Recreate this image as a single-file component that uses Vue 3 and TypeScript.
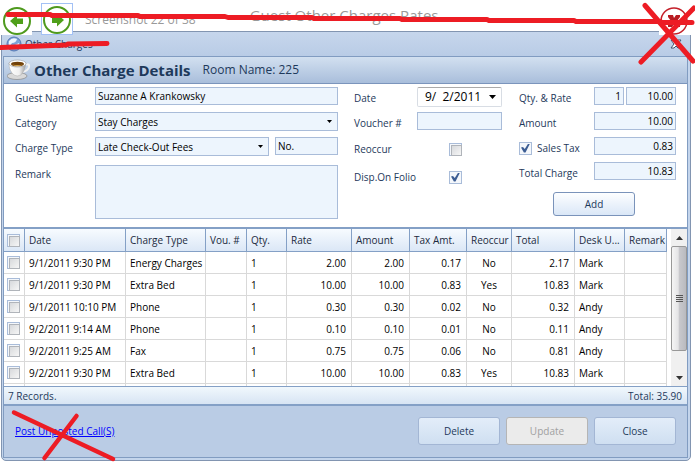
<script setup lang="ts">
import { ref } from 'vue'

interface Charge {
  date: string
  type: string
  qty: string
  rate: string
  amount: string
  tax: string
  reoccur: string
  total: string
  user: string
}

const row = (date: string, type: string, amount: string, tax: string, reoccur: string, total: string, user: string): Charge => ({
  date, type, qty: date ? '1' : '', rate: amount, amount, tax, reoccur, total, user,
})

const charges: Charge[] = [
  row('9/1/2011 9:30 PM', 'Energy Charges', '2.00', '0.17', 'No', '2.17', 'Mark'),
  row('9/1/2011 9:30 PM', 'Extra Bed', '10.00', '0.83', 'Yes', '10.83', 'Mark'),
  row('9/1/2011 10:10 PM', 'Phone', '0.30', '0.02', 'No', '0.32', 'Andy'),
  row('9/2/2011 9:14 AM', 'Phone', '0.10', '0.01', 'No', '0.11', 'Andy'),
  row('9/2/2011 9:25 AM', 'Fax', '0.75', '0.06', 'No', '0.81', 'Andy'),
  row('9/2/2011 9:30 PM', 'Extra Bed', '10.00', '0.83', 'Yes', '10.83', 'Mark'),
  row('', '', '', '', '', '', ''),
]

const headings = ['Date', 'Charge Type', 'Vou. #', 'Qty.', 'Rate', 'Amount', 'Tax Amt.', 'Reoccur', 'Total', 'Desk U...', 'Remark']

const guest = ref('Suzanne A Krankowsky')
const number = ref('No.')
const remark = ref('')
const date = ref('9/  2/2011')
const voucher = ref('')
const reoccur = ref(false)
const onFolio = ref(true)
const salesTax = ref(true)
const qty = ref('1')
const rate = ref('10.00')
const amount = ref('10.00')
const tax = ref('0.83')
const total = ref('10.83')
</script>

<template>
  <div class="page">
    <header class="viewer">
      <button class="round" type="button" aria-label="Previous">
        <svg width="28" height="28" viewBox="0 0 28 28">
          <circle cx="14" cy="14" r="13" fill="#fff" stroke="#4f9a1e" stroke-width="2" />
          <path d="M7 14l7-6v3.500h6v5.500h-6v3.500z" fill="#4f9f1a" />
        </svg>
      </button>
      <button class="round focused" type="button" aria-label="Next">
        <svg width="28" height="28" viewBox="0 0 28 28">
          <circle cx="14" cy="14" r="13" fill="#fff" stroke="#4f9a1e" stroke-width="2" />
          <path d="M21 14l-7-6v3.500h-5v5.500h5v3.500z" fill="#4f9f1a" />
        </svg>
      </button>
      <span class="counter">Screenshot 22 of 38</span>
      <h1 class="caption">Guest Other Charges Rates</h1>
      <button class="round last" type="button" aria-label="Close viewer">
        <svg width="28" height="28" viewBox="0 0 28 28">
          <circle cx="14" cy="14" r="13" fill="#fff" stroke="#c4202a" stroke-width="1.500" />
          <path d="M8 8h5l1 3 2-3h4v2l-3 4 3 4v2h-5l-1-3-2 3h-4v-2l3-4-3-4z" fill="#b81c22" />
        </svg>
      </button>
    </header>

    <main class="window">
      <div class="titlebar">
        <svg width="16" height="16" viewBox="0 0 16 16">
          <circle cx="8" cy="8" r="7" fill="#7da2d8" stroke="#5578b4" />
          <path d="M3 5q3-4 8-2-1 4-5 4l-2 3q-2-2-1-5zM9 9l4-2q1 4-3 6z" fill="#eef5ff" />
        </svg>
        <span>Other Charges</span>
        <button class="close" type="button" aria-label="Close window">
          <svg width="12" height="10" viewBox="0 0 12 10">
            <path d="M1 1h3l2 2 2-2h3L8 5l3 4H8L6 7 4 9H1l3-4z" fill="#fff" stroke="#44546e" />
          </svg>
        </button>
      </div>

      <div class="body">
        <div class="heading">
          <svg width="24" height="22" viewBox="0 0 24 22">
            <defs>
              <linearGradient id="cup" x1="0" x2="1">
                <stop offset="0" stop-color="#fff" />
                <stop offset=".6" stop-color="#f0f0f0" />
                <stop offset="1" stop-color="#9a9a9a" />
              </linearGradient>
            </defs>
            <ellipse cx="10" cy="17" rx="10" ry="3.500" fill="#d9d9d9" stroke="#888" stroke-width=".7" />
            <path d="M17 6q6-2 5 2-1 4-7 5" fill="none" stroke="#f1f1f1" stroke-width="2" />
            <path d="M2 4q0 8 5 12 3 2 7 0 4-4 5-12z" fill="url(#cup)" stroke="#aaa" stroke-width=".5" />
            <ellipse cx="10.500" cy="4.500" rx="8.500" ry="3.500" fill="#fff" stroke="#999" stroke-width=".6" />
            <ellipse cx="10.500" cy="5" rx="6.500" ry="2.300" fill="#704008" />
            <path d="M5 5.500q5 3 11 0-5 1-11 0z" fill="#d5a34a" />
          </svg>
          <h2>Other Charge Details</h2>
          <span>Room Name: 225</span>
        </div>

        <form class="form" @submit.prevent>
          <div class="group first">
            <div class="line">
              <label for="guest">Guest Name</label>
              <input id="guest" v-model="guest" class="box" type="text" />
            </div>
            <div class="line">
              <label for="category">Category</label>
              <span class="pick">
                <select id="category" class="box"><option>Stay Charges</option></select>
                <svg width="5" height="3" viewBox="0 0 5 3"><path d="M0 0h5L2.500 3z" /></svg>
              </span>
            </div>
            <div class="line">
              <label for="type">Charge Type</label>
              <span class="pick">
                <select id="type" class="box"><option>Late Check-Out Fees</option></select>
                <svg width="5" height="3" viewBox="0 0 5 3"><path d="M0 0h5L2.500 3z" /></svg>
              </span>
              <input v-model="number" class="box short" type="text" aria-label="Number" />
            </div>
            <div class="line tall">
              <label for="remark">Remark</label>
              <textarea id="remark" v-model="remark" class="box"></textarea>
            </div>
          </div>

          <div class="group second">
            <div class="line">
              <label for="date">Date</label>
              <span class="pick date">
                <input id="date" v-model="date" type="text" />
                <svg width="7" height="4" viewBox="0 0 7 4"><path d="M0 0h7L3.500 4z" /></svg>
              </span>
            </div>
            <div class="line">
              <label for="voucher">Voucher #</label>
              <input id="voucher" v-model="voucher" class="box" type="text" />
            </div>
            <div class="line ticks">
              <label for="reoccur">Reoccur</label>
              <input id="reoccur" v-model="reoccur" class="tick" type="checkbox" />
            </div>
            <div class="line ticks">
              <label for="folio">Disp.On Folio</label>
              <input id="folio" v-model="onFolio" class="tick" type="checkbox" />
            </div>
          </div>

          <div class="group third">
            <div class="line">
              <label for="rate">Qty. &amp; Rate</label>
              <input v-model="qty" class="box qty" type="text" aria-label="Quantity" />
              <input id="rate" v-model="rate" class="box" type="text" />
            </div>
            <div class="line">
              <label for="amount">Amount</label>
              <input id="amount" v-model="amount" class="box" type="text" />
            </div>
            <div class="line">
              <label class="with-tick"><input v-model="salesTax" class="tick" type="checkbox" />Sales Tax</label>
              <input v-model="tax" class="box" type="text" aria-label="Sales tax amount" />
            </div>
            <div class="line">
              <label for="total">Total Charge</label>
              <input id="total" v-model="total" class="box" type="text" />
            </div>
            <button class="action add" type="button">Add</button>
          </div>
        </form>

        <div class="grid">
          <table>
            <colgroup>
              <col class="w-check" /><col class="w-date" /><col class="w-type" /><col class="w-vou" /><col class="w-qty" /><col class="w-rate" />
              <col class="w-amount" /><col class="w-tax" /><col class="w-reoccur" /><col class="w-total" /><col class="w-user" /><col />
            </colgroup>
            <thead>
              <tr>
                <th class="c-check"><input class="tick" type="checkbox" aria-label="Select all" /></th>
                <th v-for="h in headings" :key="h" scope="col">{{ h }}</th>
              </tr>
            </thead>
            <tbody>
              <tr v-for="(c, i) in charges" :key="i">
                <td class="c-check"><input v-if="c.date" class="tick" type="checkbox" :aria-label="c.type" /></td>
                <td>{{ c.date }}</td>
                <td>{{ c.type }}</td>
                <td></td>
                <td>{{ c.qty }}</td>
                <td class="num">{{ c.rate }}</td>
                <td class="num">{{ c.amount }}</td>
                <td class="num">{{ c.tax }}</td>
                <td class="mid">{{ c.reoccur }}</td>
                <td class="num">{{ c.total }}</td>
                <td>{{ c.user }}</td>
                <td></td>
              </tr>
            </tbody>
          </table>
          <div class="scroll">
            <button type="button" aria-label="Scroll up">
              <svg width="7" height="4" viewBox="0 0 7 4"><path d="M0 4h7L3.500 0z" fill="#333" /></svg>
            </button>
            <div class="thumb"><i></i><i></i><i></i><i></i></div>
            <button type="button" aria-label="Scroll down">
              <svg width="7" height="4" viewBox="0 0 7 4"><path d="M0 0h7L3.500 4z" fill="#333" /></svg>
            </button>
          </div>
        </div>

        <div class="summary"><span>7 Records.</span><span>Total: 35.90</span></div>

        <footer class="actions">
          <a href="#">Post Unposted Call(S)</a>
          <button class="action" type="button">Delete</button>
          <button class="action" type="button" disabled>Update</button>
          <button class="action" type="button">Close</button>
        </footer>
      </div>
    </main>

    <svg class="marks" viewBox="0 0 695 463" preserveAspectRatio="none" aria-hidden="true">
      <g fill="none" stroke="#ed1c24" stroke-width="5" stroke-linecap="round" stroke-linejoin="round">
        <path d="M8 14.500H50L52 15.500H138L140 16.500H225L228 17.500H312L314 18.500H400L402 19.500H487L489 20.500H574L576 21.500H660L662 22.500H692" />
        <path d="M1 47.500L66 45 68 44 107 43.500" />
        <path d="M645 5.500L693 61M641 62L694 8" />
        <path d="M14 412.500L113 459M76.500 416L44.500 458" stroke-width="4.500" />
      </g>
    </svg>
  </div>
</template>

<style>
body {
  margin: 0;
  background: #fff;
}
</style>

<style scoped>
* {
  box-sizing: border-box;
}
.page {
  position: relative;
  overflow: hidden;
  font: 10px/20px 'Open Sans', 'Noto Sans', sans-serif;
  color: #1e395b;
  padding-bottom: 1px;
}
button,
input,
select,
textarea {
  font: inherit;
  color: inherit;
  margin: 0;
}
svg {
  display: block;
  flex: none;
}
.viewer {
  position: relative;
  z-index: 1;
  display: flex;
  align-items: flex-start;
  height: 31px;
  color: #999;
}
.round {
  flex: none;
  width: 32px;
  height: 32px;
  margin-top: 3px;
  padding: 3px 0 0 3px;
  border: 0;
  background: #fff;
}
.round.focused {
  margin-left: 9px;
  padding: 2px 0 0 1px;
  border: 1px solid #a3c1f5;
}
.round.last {
  width: 36px;
  margin-left: auto;
  padding-left: 1px;
}
.counter {
  margin: 9px 0 0 12px;
  font-size: 12px;
  line-height: 22px;
}
.caption {
  margin: 4px 0 0 54px;
  font-size: 15px;
  font-weight: 400;
  line-height: 22px;
}
.window {
  margin: 0 4px 0 1px;
  padding: 0 2px 2px 1px;
  border: 1px solid #8295b1;
  border-radius: 0 0 5px 5px;
  background: #c4d5ec;
}
.titlebar {
  display: flex;
  align-items: center;
  gap: 3px;
  height: 24px;
  margin: 0 -2px 0 -1px;
  padding: 0 8px 0 4px;
  background: linear-gradient(#c6d6ec, #b9cce6);
}
.close {
  margin-left: auto;
  padding: 0;
  border: 0;
  background: none;
}
.body {
  border: 1px solid #819cc1;
}
.heading {
  display: flex;
  align-items: center;
  height: 27px;
  padding-left: 3px;
  background: linear-gradient(#d2e0f0, #a9bedb);
  border-bottom: 1px solid #7b95bc;
}
.heading h2 {
  margin: 0 12px 0 3px;
  font-size: 15px;
  font-weight: 700;
}
.heading span {
  font-size: 12px;
}
.form {
  display: flex;
  height: 143px;
  padding: 3px 11px 0;
  background: #fff;
}
.group {
  display: flex;
  flex-direction: column;
  gap: 4px;
}
.first {
  flex: 1;
  margin-right: 16px;
}
.second {
  width: 148px;
  margin-right: 17px;
}
.third {
  width: 157px;
}
.line {
  display: flex;
  height: 21px;
  align-items: flex-start;
}
.line label {
  flex: none;
  line-height: 22px;
}
.first label {
  width: 80px;
}
.second label {
  width: 63px;
}
.third label {
  width: 75px;
}
.box {
  flex: 1;
  min-width: 0;
  height: 18px;
  padding: 0 2px;
  border: 1px solid #a9bcd9;
  border-radius: 0;
  background: #edf5fd;
  color: #000;
  line-height: 16px;
  outline: 0;
}
.box.short {
  flex: 0 0 63px;
  margin-left: 6px;
}
.box.qty {
  flex: 0 0 30px;
  margin-right: 2px;
}
.third .box {
  text-align: right;
}
.pick {
  position: relative;
  display: flex;
  flex: 1;
}
.pick .box {
  height: 19px;
  appearance: none;
}
.pick svg {
  position: absolute;
  top: 8px;
  right: 6px;
  pointer-events: none;
}
.line.tall {
  height: 57px;
  padding-top: 3px;
}
.tall .box {
  height: 54px;
  resize: none;
}
.tall label {
  line-height: 18px;
}
.date input {
  width: 100%;
  height: 20px;
  padding: 0 0 0 7px;
  border: 1px solid #d8dde4;
  border-top-color: #aaa;
  border-radius: 2px;
  background: #fff;
  color: #000;
  font-size: 12px;
}
.line.ticks {
  height: 24px;
  align-items: center;
}
.ticks label {
  flex: 1;
}
.ticks .tick {
  margin-right: 40px;
}
.tick {
  display: block;
  flex: none;
  width: 13px;
  height: 13px;
  padding: 1px;
  appearance: none;
  border: 1px solid #a9bcd9;
  background: #f4f7fb;
}
.tick::before {
  content: '';
  display: block;
  width: 9px;
  height: 9px;
  border: 1px solid #b0b4ba;
  background: linear-gradient(135deg, #d7d9dc, #f6f6f6);
}
.tick:checked::before {
  border: 0;
  background: #3c5d93;
  clip-path: polygon(0 45%, 22% 38%, 42% 62%, 80% 0, 100% 0, 50% 100%, 32% 100%);
}
.line .with-tick {
  display: flex;
  align-items: center;
  gap: 5px;
}
.action {
  width: 82px;
  height: 28px;
  padding: 0;
  border: 1px solid #a3b6d4;
  border-radius: 3px;
  background: linear-gradient(#e3edf9, #cfdff1);
}
.action:disabled {
  border-color: #b5b5b5;
  background: #ebebeb;
  color: #a0a0a0;
}
.action.add {
  flex: none;
  height: 24px;
  margin: 5px 0 0 34px;
  border-color: #7a93ba;
  background: linear-gradient(#fdfeff, #dae7f7);
}
.grid {
  display: flex;
  height: 159px;
  overflow: hidden;
  border-top: 2px solid #84a0c6;
  background: #fff;
}
table {
  flex: 1;
  width: 0;
  table-layout: fixed;
  border-collapse: separate;
  border-spacing: 0;
  color: #000;
}
.w-check { width: 21px; }
.w-date { width: 101px; }
.w-type { width: 80px; }
.w-vou { width: 41px; }
.w-qty { width: 40px; }
.w-rate { width: 65px; }
.w-amount { width: 58px; }
.w-tax { width: 57px; }
.w-reoccur { width: 45px; }
.w-total { width: 63px; }
.w-user { width: 50px; }
th,
td {
  height: 22px;
  padding: 0 4px;
  overflow: hidden;
  white-space: nowrap;
  text-align: left;
  line-height: 20px;
  border-right: 1px solid #d9d9d9;
  border-bottom: 1px solid #d9d9d9;
}
th {
  height: 23px;
  font-weight: 400;
  color: #1b2a40;
  background: linear-gradient(#f7fbff, #dbe7f6);
  border-color: #84a0c6;
}
td.num {
  padding-right: 5px;
  text-align: right;
}
td.mid {
  padding: 0;
  text-align: center;
}
th.c-check,
td.c-check {
  padding: 0 0 0 3px;
}
.scroll {
  display: flex;
  flex-direction: column;
  width: 16px;
  margin: 0 0 0 4px;
  background: #f0f0f0;
}
.scroll button {
  display: flex;
  align-items: center;
  justify-content: center;
  height: 17px;
  padding: 0;
  border: 0;
  background: none;
}
.thumb {
  display: flex;
  flex-direction: column;
  align-items: center;
  justify-content: center;
  gap: 1px;
  height: 105px;
  margin-bottom: auto;
  border: 1px solid #989898;
  border-radius: 2px;
  background: linear-gradient(90deg, #f5f5f5, #e4e4e6 45%, #c9c9cd 50%, #b9babf);
}
.thumb i {
  width: 7px;
  height: 1px;
  background: #555;
}
.summary {
  display: flex;
  justify-content: space-between;
  height: 20px;
  padding: 0 5px 0 4px;
  line-height: 18px;
  border-top: 1px solid #84a0c6;
  border-bottom: 2px solid #84a0c6;
  background: linear-gradient(#f1f8fd, #d7e4f3);
}
.actions {
  display: flex;
  align-items: center;
  gap: 6px;
  height: 51px;
  padding: 0 11px 2px;
  background: #bacce5;
}
.actions a {
  margin-right: auto;
  color: #00f;
  text-decoration: underline;
}
.marks {
  position: absolute;
  z-index: 2;
  top: 0;
  left: 0;
  width: 100%;
  height: 463px;
  pointer-events: none;
}
</style>
